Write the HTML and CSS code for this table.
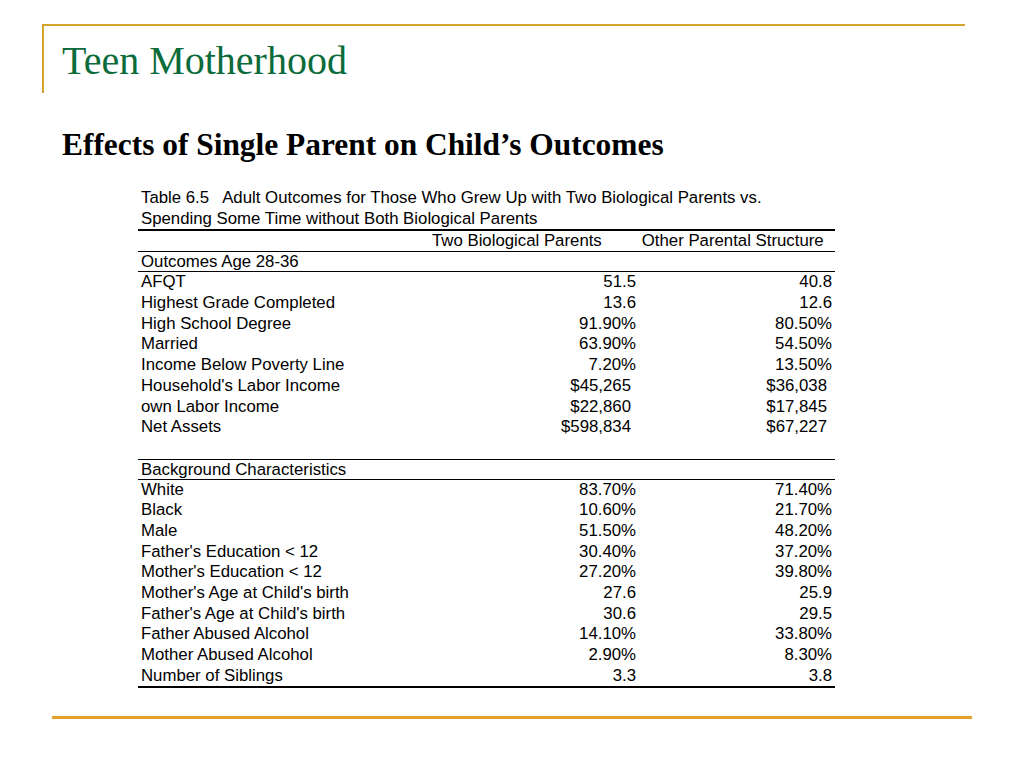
FILE: index.html
```html
<!DOCTYPE html>
<html>
<head>
<meta charset="utf-8">
<link rel="stylesheet" href="styles.css">
</head>
<body>
<div class="slide">
  <header class="title-box">
    <h1 class="title">Teen Motherhood</h1>
  </header>
  <h2 class="subtitle">Effects of Single Parent on Child’s Outcomes</h2>
  <div class="table">
    <div class="caption">Table 6.5&nbsp;&nbsp; Adult Outcomes for Those Who Grew Up with Two Biological Parents vs.<br>Spending Some Time without Both Biological Parents</div>
    <div class="head-row">
      <span class="h1">Two Biological Parents</span>
      <span class="h2">Other Parental Structure</span>
    </div>
    <div class="section">Outcomes Age 28-36</div>
    <div class="row"><span>AFQT</span><span>51.5</span><span>40.8</span></div>
    <div class="row"><span>Highest Grade Completed</span><span>13.6</span><span>12.6</span></div>
    <div class="row"><span>High School Degree</span><span>91.90%</span><span>80.50%</span></div>
    <div class="row"><span>Married</span><span>63.90%</span><span>54.50%</span></div>
    <div class="row"><span>Income Below Poverty Line</span><span>7.20%</span><span>13.50%</span></div>
    <div class="row money"><span>Household's Labor Income</span><span>$45,265</span><span>$36,038</span></div>
    <div class="row money"><span>own Labor Income</span><span>$22,860</span><span>$17,845</span></div>
    <div class="row money"><span>Net Assets</span><span>$598,834</span><span>$67,227</span></div>
    <div class="row blank"></div>
    <div class="section top">Background Characteristics</div>
    <div class="row"><span>White</span><span>83.70%</span><span>71.40%</span></div>
    <div class="row"><span>Black</span><span>10.60%</span><span>21.70%</span></div>
    <div class="row"><span>Male</span><span>51.50%</span><span>48.20%</span></div>
    <div class="row"><span>Father's Education &lt; 12</span><span>30.40%</span><span>37.20%</span></div>
    <div class="row"><span>Mother's Education &lt; 12</span><span>27.20%</span><span>39.80%</span></div>
    <div class="row"><span>Mother's Age at Child's birth</span><span>27.6</span><span>25.9</span></div>
    <div class="row"><span>Father's Age at Child's birth</span><span>30.6</span><span>29.5</span></div>
    <div class="row"><span>Father Abused Alcohol</span><span>14.10%</span><span>33.80%</span></div>
    <div class="row"><span>Mother Abused Alcohol</span><span>2.90%</span><span>8.30%</span></div>
    <div class="row last"><span>Number of Siblings</span><span>3.3</span><span>3.8</span></div>
  </div>
  <div class="footer-line"></div>
</div>
</body>
</html>
```

FILE: styles.css
```css
html, body {
  margin: 0;
  padding: 0;
  background: #ffffff;
}

.slide {
  width: 1024px;
  height: 768px;
  position: relative;
  overflow: hidden;
  background: #ffffff;
}

.title-box {
  margin: 24px 0 0 42px;
  width: 921px;
  height: 67px;
  border-top: 2px solid #d3a52c;
  border-left: 2px solid #d3a52c;
  box-sizing: content-box;
}

.title {
  margin: 0;
  padding: 14px 0 0 18px;
  font-family: "Liberation Serif", "DejaVu Serif", serif;
  font-weight: normal;
  font-size: 40px;
  line-height: 42px;
  color: #0b6b3a;
}

.subtitle {
  margin: 36px 0 0 62px;
  font-family: "Liberation Serif", "DejaVu Serif", serif;
  font-weight: bold;
  font-size: 31.4px;
  line-height: 32px;
  color: #000000;
}

.table {
  margin: 27px 0 0 138px;
  width: 697px;
  font-family: "Liberation Sans", Arial, sans-serif;
  font-size: 16.8px;
  color: #000000;
}

.caption {
  padding-left: 3px;
  line-height: 20.7px;
  border-bottom: 2px solid #000;
  white-space: nowrap;
}

.head-row {
  display: flex;
  height: 20px;
  line-height: 20px;
  padding-left: 294px;
  border-bottom: 1.5px solid #000;
}

.head-row .h2 {
  margin-left: 40px;
}

.section {
  padding-left: 3px;
  height: 19px;
  line-height: 19px;
  border-bottom: 1.5px solid #000;
}

.section.top {
  border-top: 1.5px solid #000;
}

.row {
  display: grid;
  grid-template-columns: 298px 200px 196px;
  height: 20.7px;
  line-height: 20.7px;
  white-space: nowrap;
}

.row span:first-child {
  padding-left: 3px;
}

.row span:nth-child(2),
.row span:nth-child(3) {
  text-align: right;
}

.row.money span:nth-child(2),
.row.money span:nth-child(3) {
  padding-right: 5px;
}

.row.last {
  border-bottom: 2px solid #000;
}

.footer-line {
  margin: 28px 0 0 52px;
  width: 920px;
  height: 3px;
  background: #e2a12a;
}
```
